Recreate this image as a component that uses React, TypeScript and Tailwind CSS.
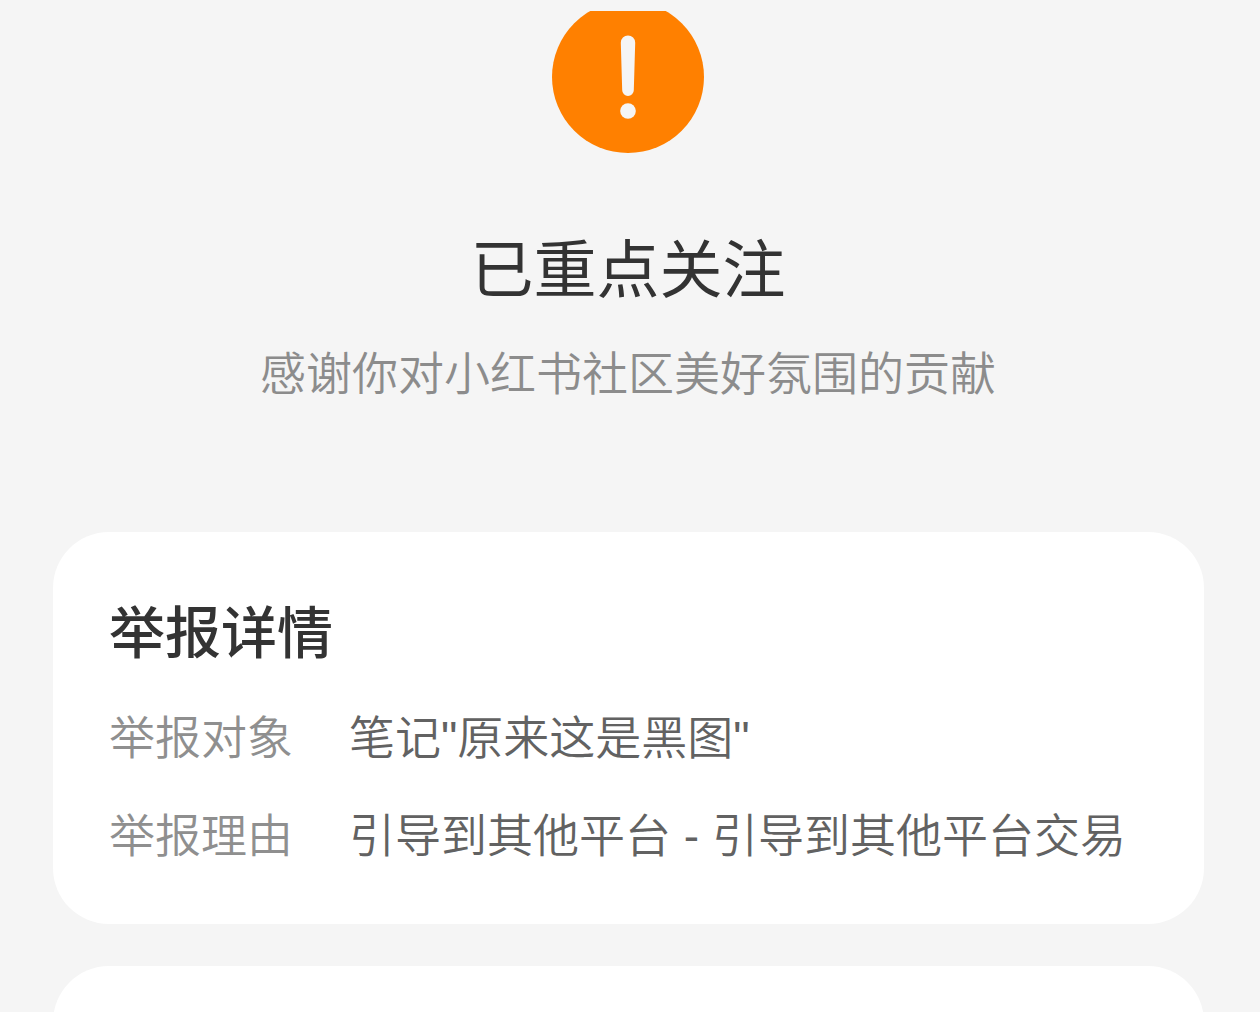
import React from 'react';

interface DetailRowProps {
  label: string;
  value: string;
}

function AlertBadge() {
  return (
    <svg className="block h-[142px] w-[152px]" viewBox="0 10 152 142" role="img" aria-label="提示">
      <circle cx="76" cy="76" r="76" fill="#ff8000" />
      <path d="M76 34.500a7.200 7.200 0 0 1 7.200 7.200l-1.400 47.500a5.800 5.800 0 0 1-11.600 0l-1.400-47.500a7.200 7.200 0 0 1 7.200-7.200z" fill="#f5f5f5" />
      <circle cx="76" cy="110" r="7.800" fill="#f5f5f5" />
    </svg>
  );
}

function DetailRow({ label, value }: DetailRowProps) {
  return (
    <div className="flex text-[46px] leading-[66px]">
      <dt className="w-[240px] shrink-0 text-[#8f8f8f]">{label}</dt>
      <dd className="whitespace-nowrap text-[#626262]">{value}</dd>
    </div>
  );
}

export default function App() {
  return (
    <div className="h-screen overflow-hidden bg-[#f5f5f5] pt-[11px] font-['Liberation_Sans','Noto_Sans_CJK_SC',sans-serif]">
      <header className="flex flex-col items-center pr-1 text-center">
        <AlertBadge />
        <h1 className="mt-[72px] text-[63px] leading-[90px] text-[#333333]">已重点关注</h1>
        <p className="mt-[26px] text-[46px] leading-[66px] font-[350] text-[#8c8c8c]">
          感谢你对小红书社区美好氛围的贡献
        </p>
      </header>

      <main className="mt-[125px] mr-14 ml-[53px] flex flex-col gap-[42px]">
        <section className="rounded-[56px] bg-white px-14 pt-[62px] pb-[55px]">
          <h2 className="text-[56px] leading-[80px] font-medium text-[#333333]">举报详情</h2>
          <dl className="mt-[31px] flex flex-col gap-8 font-[350]">
            <DetailRow label="举报对象" value={'笔记"原来这是黑图"'} />
            <DetailRow label="举报理由" value="引导到其他平台 - 引导到其他平台交易" />
          </dl>
        </section>
        <section className="h-[240px] rounded-[56px] bg-white" />
      </main>
    </div>
  );
}
